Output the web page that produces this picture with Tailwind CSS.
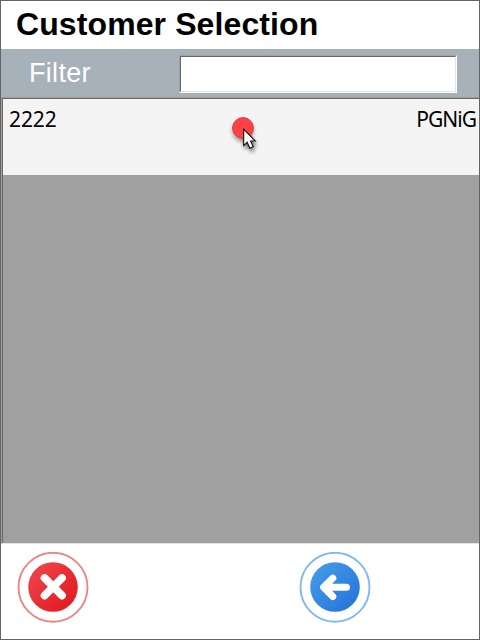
<!DOCTYPE html>
<html lang="en">
<head>
<meta charset="utf-8">
<title>Customer Selection</title>
<script src="https://cdn.jsdelivr.net/npm/@tailwindcss/browser@4"></script>
</head>
<body class="bg-white">
<main class="relative flex flex-col w-[480px] h-[640px] overflow-hidden border border-[#646464] bg-white font-['Liberation_Sans',Arial,sans-serif]">
  <header class="h-12 shrink-0 pl-[15px] pt-[3px]">
    <h1 class="text-[32px] leading-[40px] tracking-[0.1px] font-bold text-black whitespace-nowrap">Customer Selection</h1>
  </header>
  <div class="flex h-12 shrink-0 bg-[#a7b1b9] pl-7 pt-[6px]">
    <label for="filter" class="w-[150px] text-[27px] leading-[36px] tracking-[0.3px] text-white">Filter</label>
    <div class="h-[38px] w-[278px] border border-t-[#a0a0a0] border-l-[#a0a0a0] border-r-white border-b-white">
      <input id="filter" type="text" class="block h-full w-full bg-white border border-t-[#696969] border-l-[#696969] border-r-[#e3e3e3] border-b-[#e3e3e3] outline-none">
    </div>
  </div>
  <section class="h-[447px] shrink-0 border-t border-l border-[#a0a0a0] border-b border-b-[#e3e3e3]">
    <div class="h-full border-t border-l border-[#696969] bg-[#a0a0a0]">
      <div class="flex h-[76px] justify-between bg-[#f4f4f4] pl-[6px] pr-[3px] pt-[5px] text-[21px] leading-[30px] text-black font-['Noto_Sans','Open_Sans',sans-serif]">
        <span class="tracking-[-0.1px]">2222</span>
        <span class="tracking-[-1px]">PGNiG</span>
      </div>
    </div>
  </section>
  <footer class="flex flex-1 pl-4 pt-2 gap-[210px]">
    <button class="size-[72px]" aria-label="Cancel">
      <svg viewBox="0 0 72 72" class="size-[72px]">
        <defs><linearGradient id="red" x1="0" y1="0" x2="1" y2="1"><stop offset="0" stop-color="#f0494f"/><stop offset="1" stop-color="#df151b"/></linearGradient></defs>
        <circle cx="36" cy="35.3" r="34.5" fill="#fff" stroke="#ec8488" stroke-width="1.9"/>
        <circle cx="36" cy="35" r="24.8" fill="url(#red)"/>
        <path d="M27.6 26.1L45 43.5M45 26.1L27.6 43.5" stroke="#fff" stroke-width="7.8" stroke-linecap="round"/>
      </svg>
    </button>
    <button class="size-[72px]" aria-label="Back">
      <svg viewBox="0 0 72 72" class="size-[72px]">
        <defs><linearGradient id="blue" x1="0" y1="0" x2="1" y2="1"><stop offset="0" stop-color="#45a0ea"/><stop offset="1" stop-color="#256fd8"/></linearGradient></defs>
        <circle cx="36" cy="35.3" r="34.5" fill="#fff" stroke="#80b9f0" stroke-width="1.9"/>
        <circle cx="36" cy="35" r="24.8" fill="url(#blue)"/>
        <path d="M33.8 26.1L24.6 35.3L33.8 44.5M25.3 35.3H47.5" fill="none" stroke="#fff" stroke-width="7" stroke-linecap="round" stroke-linejoin="round"/>
      </svg>
    </button>
  </footer>
  <svg viewBox="0 0 70 60" class="absolute left-[209px] top-[99px] w-[70px] h-[60px] pointer-events-none">
    <defs><filter id="shadow" x="-50%" y="-50%" width="200%" height="200%"><feGaussianBlur stdDeviation="2"/></filter></defs>
    <circle cx="33" cy="31" r="10.5" fill="#000" opacity=".4" filter="url(#shadow)"/>
    <path d="M34 31V49L38 46L41 52L45 50L42 45H47Z" fill="#000" opacity=".6" filter="url(#shadow)"/>
    <circle cx="33" cy="28" r="10.4" fill="#fe4144" stroke="#d63b40"/>
    <path d="M33.7 29.2V45.6L37.2 42.3L39.8 48.3L43.2 46.8L40.6 41H45.3Z" fill="#fff" stroke="#111" stroke-width="1.1"/>
  </svg>
</main>
</body>
</html>
